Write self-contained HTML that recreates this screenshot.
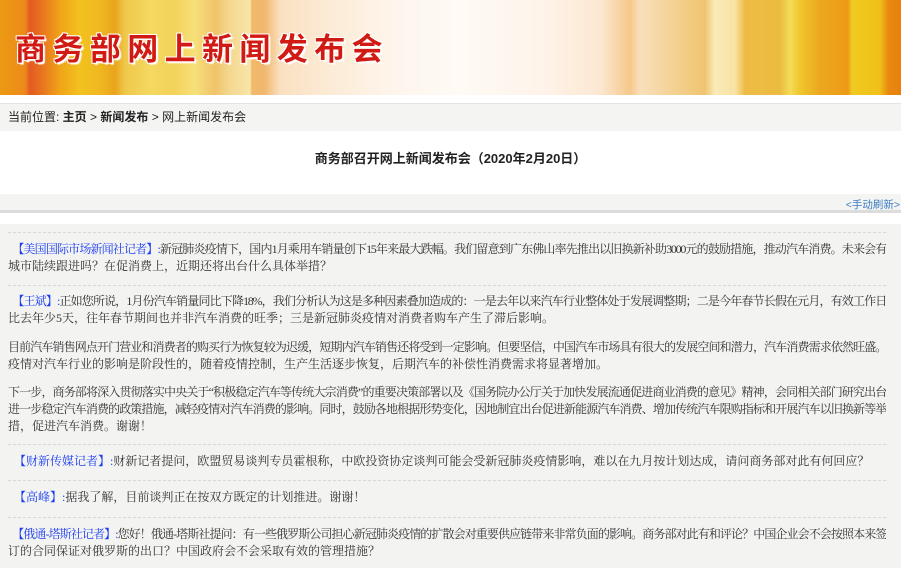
<!DOCTYPE html>
<html><head><meta charset="utf-8">
<style>
*{margin:0;padding:0;box-sizing:border-box}
body{width:901px;height:568px;overflow:hidden;background:#fff;font-family:"Liberation Sans","Noto Sans CJK SC",sans-serif;color:#333;position:relative}
#banner{position:absolute;left:0;top:0;width:901px;height:95px;
background:linear-gradient(90deg,#eb9a14 0,#ec8a1a 25px,#e35a22 30px,#e76f20 40px,#f0a418 60px,#f2c21e 80px,#f0b820 100px,#e9a41c 115px,#efc84a 125px,#f4d860 150px,#f3d35a 175px,#f7e07a 195px,#f0c36a 215px,#f4d890 230px,#f7e5a8 250px,#f2b86a 252px,#f0b870 265px,#f9e0c0 280px,#fce9d2 320px,#fdf0e0 360px,#fef6ee 400px,#fffaf5 460px,#fef4ea 540px,#fce8d2 600px,#f6c88a 630px,#f9dfbc 640px,#f3cf8c 680px,#f0c470 705px,#faeab8 715px,#f7e3a4 735px,#eebc46 745px,#ebbb40 780px,#f4dc58 790px,#f0c62e 800px,#eba81e 820px,#ee9a16 848px,#f1ca20 852px,#f0c018 880px,#e88a10 888px,#e7800e 901px)}
#title{position:absolute;left:15px;top:27px;font-size:31px;font-weight:bold;letter-spacing:6.4px;color:#d11a14;font-family:"Noto Sans CJK SC",sans-serif;line-height:40px;
text-shadow:1px 1px 0 #fff,-1px -1px 0 #fff,1px -1px 0 #fff,-1px 1px 0 #fff,2px 2px 1px #fff}
#crumb{position:absolute;left:0;top:103px;width:901px;height:28px;background:#f4f4f3;border-top:1px solid #e4e4e4;font-size:12px;line-height:27px;padding-left:8px;color:#222}
#crumb b{font-weight:bold}
#h{position:absolute;left:0;top:150px;width:901px;text-align:center;font-size:13px;font-weight:bold;color:#222;line-height:18px}
#bar{position:absolute;left:0;top:194px;width:901px;height:19px;background:#f4f4f3;border-bottom:3px solid #dcdcdc}
#bar span{position:absolute;right:1px;top:3px;font-size:10.5px;color:#3b7dc2}
#content{position:absolute;left:0;top:224px;width:901px;height:344px;background:#f3f3f2}
.dot{position:absolute;left:8px;width:878px;border-top:1px dashed #d8d8d8}
.p{position:absolute;left:8px;width:878px;font-family:"Liberation Serif","Noto Serif CJK SC",serif;font-size:12px;line-height:17px;color:#333}
.p div{white-space:nowrap;height:17px}
.j{text-align:justify;text-align-last:justify;white-space:normal!important;letter-spacing:-1.3px;overflow:hidden}
.s{color:#1a3cf0}
</style></head><body>
<div id="banner"><div id="title">商务部网上新闻发布会</div></div>
<div id="crumb">当前位置: <b>主页</b> &gt; <b>新闻发布</b> &gt; 网上新闻发布会</div>
<div id="h">商务部召开网上新闻发布会（2020年2月20日）</div>
<div id="bar"><span>&lt;手动刷新&gt;</span></div>
<div id="content"></div>
<div class="dot" style="top:232px"></div>
<div class="p" style="top:241px"><div class="j"><span class="s">&nbsp; 【美国国际市场新闻社记者】:</span>新冠肺炎疫情下，国内1月乘用车销量创下15年来最大跌幅。我们留意到广东佛山率先推出以旧换新补助3000元的鼓励措施，推动汽车消费。未来会有</div><div>城市陆续跟进吗？在促消费上，近期还将出台什么具体举措？</div></div>
<div class="dot" style="top:285px"></div>
<div class="p" style="top:293px"><div class="j"><span class="s">&nbsp; 【王斌】:</span>正如您所说，1月份汽车销量同比下降18%，我们分析认为这是多种因素叠加造成的：一是去年以来汽车行业整体处于发展调整期；二是今年春节长假在元月，有效工作日</div><div>比去年少5天，往年春节期间也并非汽车消费的旺季；三是新冠肺炎疫情对消费者购车产生了滞后影响。</div></div>
<div class="p" style="top:339px"><div class="j">目前汽车销售网点开门营业和消费者的购买行为恢复较为迟缓，短期内汽车销售还将受到一定影响。但要坚信，中国汽车市场具有很大的发展空间和潜力，汽车消费需求依然旺盛。</div><div>疫情对汽车行业的影响是阶段性的，随着疫情控制，生产生活逐步恢复，后期汽车的补偿性消费需求将显著增加。</div></div>
<div class="p" style="top:384px"><div class="j">下一步，商务部将深入贯彻落实中央关于“积极稳定汽车等传统大宗消费”的重要决策部署以及《国务院办公厅关于加快发展流通促进商业消费的意见》精神，会同相关部门研究出台</div><div class="j">进一步稳定汽车消费的政策措施，减轻疫情对汽车消费的影响。同时，鼓励各地根据形势变化，因地制宜出台促进新能源汽车消费、增加传统汽车限购指标和开展汽车以旧换新等举</div><div>措，促进汽车消费。谢谢！</div></div>
<div class="dot" style="top:444px"></div>
<div class="p" style="top:453px"><div><span class="s">&nbsp; 【财新传媒记者】:</span>财新记者提问，欧盟贸易谈判专员霍根称，中欧投资协定谈判可能会受新冠肺炎疫情影响，难以在九月按计划达成，请问商务部对此有何回应？</div></div>
<div class="dot" style="top:480px"></div>
<div class="p" style="top:489px"><div><span class="s">&nbsp; 【高峰】:</span>据我了解，目前谈判正在按双方既定的计划推进。谢谢！</div></div>
<div class="dot" style="top:517px"></div>
<div class="p" style="top:526px"><div class="j"><span class="s">&nbsp; 【俄通-塔斯社记者】:</span>您好！俄通-塔斯社提问：有一些俄罗斯公司担心新冠肺炎疫情的扩散会对重要供应链带来非常负面的影响。商务部对此有和评论？中国企业会不会按照本来签</div><div>订的合同保证对俄罗斯的出口？中国政府会不会采取有效的管理措施？</div></div>
</body></html>
